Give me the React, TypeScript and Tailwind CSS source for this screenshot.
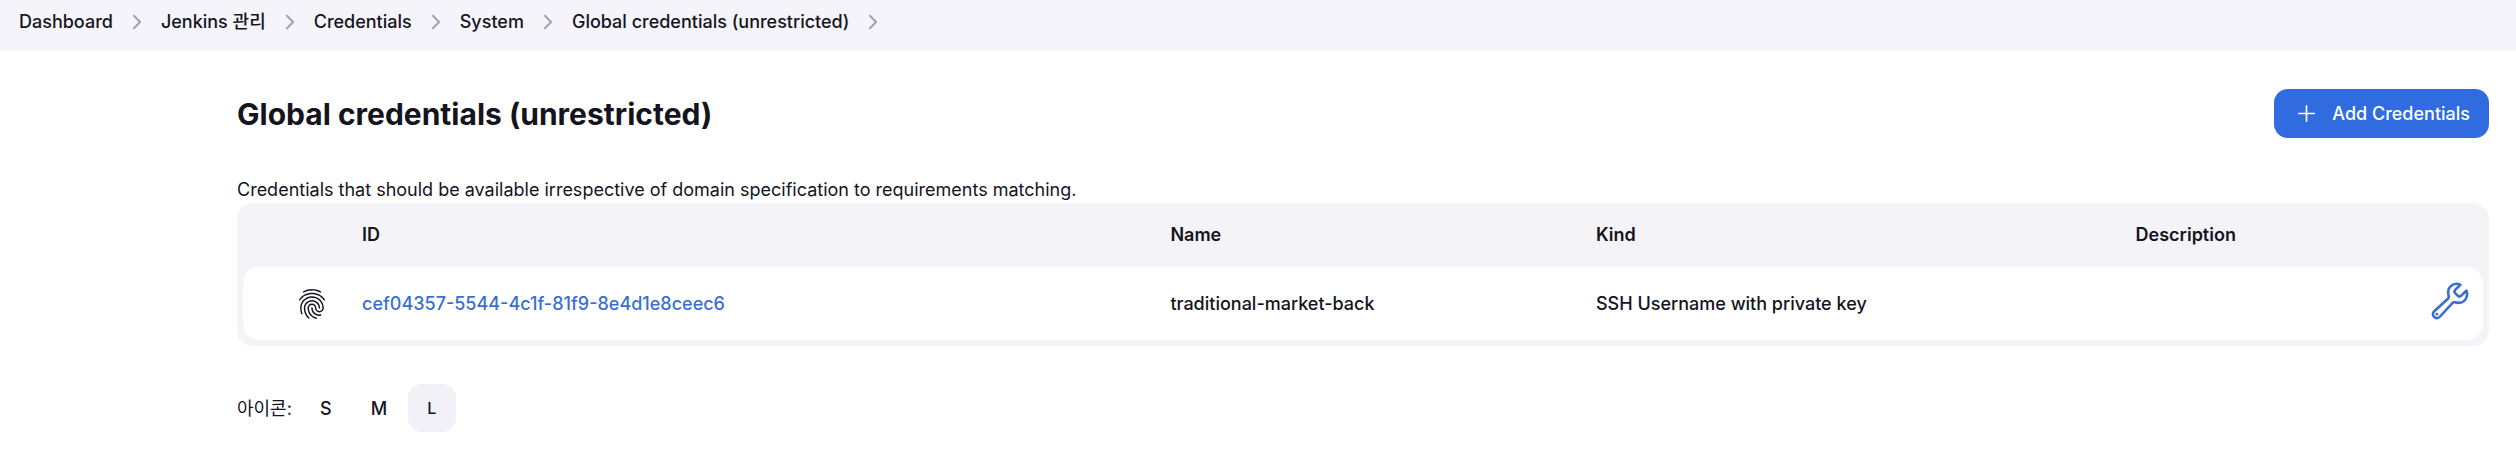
import React, { useState } from "react";
import {
  IoAdd,
  IoBuildOutline,
  IoChevronForward,
  IoFingerPrintOutline,
} from "react-icons/io5";

interface Credential {
  id: string;
  name: string;
  kind: string;
  description: string;
}

const breadcrumbs = [
  "Dashboard",
  "Jenkins 관리",
  "Credentials",
  "System",
  "Global credentials (unrestricted)",
];

const credentials: Credential[] = [
  {
    id: "cef04357-5544-4c1f-81f9-8e4d1e8ceec6",
    name: "traditional-market-back",
    kind: "SSH Username with private key",
    description: "",
  },
];

const iconSizes = ["S", "M", "L"];

const Breadcrumbs: React.FC = () => {
  return (
    <nav aria-label="Breadcrumb" className="bg-[#f4f4fa] h-[51px] px-[19px]">
      <ol className="flex items-center h-[43px] font-medium">
        {breadcrumbs.map((label) => (
          <li key={label} className="flex items-center">
            <a href="#">{label}</a>
            <IoChevronForward className="w-[22px] h-[22px] mx-[13px] text-[#a3a3b3]" />
          </li>
        ))}
      </ol>
    </nav>
  );
};

const CredentialsTable: React.FC = () => {
  return (
    <div className="bg-[#f3f3f8] rounded-2xl px-[6px] pb-[6px]">
      <table className="w-full table-fixed text-left">
        <colgroup>
          <col className="w-[101px]" />
          <col className="w-[36%]" />
          <col className="w-[19%]" />
          <col className="w-[24%]" />
          <col />
          <col className="w-[102px]" />
        </colgroup>
        <thead>
          <tr className="h-16">
            <th></th>
            <th className="px-[18px] pb-[2px] font-semibold">ID</th>
            <th className="px-5 pb-[2px] font-semibold">Name</th>
            <th className="px-5 pb-[2px] font-semibold">Kind</th>
            <th className="px-[22px] pb-[2px] font-semibold">Description</th>
            <th></th>
          </tr>
        </thead>
        <tbody>
          {credentials.map((data: Credential) => (
            <tr key={data.id} className="h-[73px] font-medium">
              <td className="bg-white rounded-l-2xl">
                <IoFingerPrintOutline className="w-8 h-8 ml-auto mr-[16px]" />
              </td>
              <td className="bg-white px-[18px]">
                <a href="#" className="text-[#3a6fd0]">
                  {data.id}
                </a>
              </td>
              <td className="bg-white px-5">{data.name}</td>
              <td className="bg-white px-5">{data.kind}</td>
              <td className="bg-white px-[22px]">{data.description}</td>
              <td className="bg-white rounded-r-2xl">
                <a
                  href="#"
                  aria-label="Update"
                  className="flex justify-end pr-3 pb-[6px] text-[#3a6fd0]"
                >
                  <IoBuildOutline className="w-[42px] h-[42px]" />
                </a>
              </td>
            </tr>
          ))}
        </tbody>
      </table>
    </div>
  );
};

const App: React.FC = () => {
  const [iconSize, setIconSize] = useState<string>("L");

  return (
    <div className="bg-white text-[#14141f] text-[18px] leading-[27px] font-['Inter','Noto_Sans_CJK_KR',sans-serif]">
      <Breadcrumbs />
      <main className="pl-[237px] pr-[27px] pt-[38px]">
        <div className="flex items-center justify-between">
          <h1 className="text-[30px] leading-[48px] font-bold">
            Global credentials (unrestricted)
          </h1>
          <button className="flex items-center gap-3 h-[49px] px-[19px] rounded-[14px] bg-[#306cdf] text-white font-medium">
            <IoAdd className="w-[27px] h-[27px]" />
            Add Credentials
          </button>
        </div>

        <p className="mt-[38px]">
          Credentials that should be available irrespective of domain
          specification to requirements matching.
        </p>
        <CredentialsTable />

        <div className="flex items-center mt-[38px]">
          <span className="mr-[10px]">아이콘:</span>
          <div className="flex gap-[5px]">
            {iconSizes.map((size) => (
              <button
                key={size}
                onClick={() => setIconSize(size)}
                className={
                  iconSize === size
                    ? "w-12 h-12 rounded-[14px] bg-[#f1f1f7] text-base font-medium"
                    : "w-12 h-12 rounded-[14px] font-medium"
                }
              >
                {size}
              </button>
            ))}
          </div>
        </div>
      </main>
    </div>
  );
};

export default App;
